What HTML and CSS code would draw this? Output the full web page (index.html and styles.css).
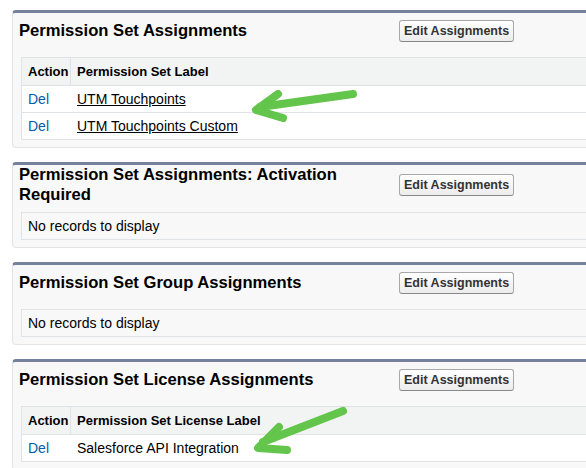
FILE: index.html
```html
<!DOCTYPE html>
<html>
<head>
<meta charset="utf-8">
<link rel="stylesheet" href="styles.css">
</head>
<body>
<div class="page">
  <div class="block">
    <div class="block-head">
      <h2 class="title">Permission Set Assignments</h2>
      <button class="btn">Edit Assignments</button>
    </div>
    <table class="list">
      <tr><th class="c-act">Action</th><th>Permission Set Label</th></tr>
      <tr><td class="c-act"><a class="del" href="#">Del</a></td><td><a class="lbl" href="#">UTM Touchpoints</a></td></tr>
      <tr><td class="c-act"><a class="del" href="#">Del</a></td><td><a class="lbl" href="#">UTM Touchpoints Custom</a></td></tr>
    </table>
  </div>

  <div class="block">
    <div class="block-head">
      <h2 class="title">Permission Set Assignments: Activation Required</h2>
      <button class="btn">Edit Assignments</button>
    </div>
    <div class="empty">No records to display</div>
  </div>

  <div class="block">
    <div class="block-head">
      <h2 class="title">Permission Set Group Assignments</h2>
      <button class="btn">Edit Assignments</button>
    </div>
    <div class="empty">No records to display</div>
  </div>

  <div class="block">
    <div class="block-head">
      <h2 class="title">Permission Set License Assignments</h2>
      <button class="btn">Edit Assignments</button>
    </div>
    <table class="list">
      <tr><th class="c-act">Action</th><th>Permission Set License Label</th></tr>
      <tr><td class="c-act"><a class="del" href="#">Del</a></td><td>Salesforce API Integration</td></tr>
    </table>
  </div>
</div>

<svg class="arrows" width="586" height="468" viewBox="0 0 586 468">
  <g fill="none" stroke="#63c54b" stroke-width="8" stroke-linecap="round" stroke-linejoin="round">
    <path d="M278 94 L256 110 L283 118"/>
    <path d="M260 107 L353 94"/>
    <path d="M279 427 L258 448 L287 450"/>
    <path d="M263 442 L343 411"/>
  </g>
</svg>
</body>
</html>
```

FILE: styles.css
```css
html, body {
  margin: 0;
  padding: 0;
  overflow: hidden;
  background: #ffffff;
}

body {
  font-family: "Liberation Sans", Arial, sans-serif;
  color: #000;
  width: 586px;
  height: 468px;
  position: relative;
}

.page {
  width: 586px;
  height: 468px;
  box-sizing: border-box;
  overflow: hidden;
  padding: 10px 0 0 12px;
  display: flex;
  flex-direction: column;
  gap: 14px;
}

.block {
  flex: none;
  width: 640px;
  background: #f8f8f8;
  border: 1px solid #e2e4e6;
  border-top: 3px solid #76819b;
  border-radius: 4px;
  padding: 0 0 7px 8px;
}

.block-head {
  display: flex;
  align-items: center;
  min-height: 36px;
  margin-bottom: 8px;
}

.title {
  margin: 0 0 0 -2px;
  width: 370px;
  font-size: 16.6px;
  line-height: 19.5px;
  font-weight: bold;
  color: #000;
}

.btn {
  margin-left: 10px;
  height: 22px;
  padding: 0 4px;
  font-family: "Liberation Sans", Arial, sans-serif;
  font-size: 12.5px;
  font-weight: bold;
  color: #333;
  background: linear-gradient(#ffffff, #ececec);
  border: 1px solid #a8a8a8;
  border-bottom-color: #888888;
  border-radius: 3px;
}

.list {
  width: 100%;
  border-collapse: separate;
  border-spacing: 0;
  background: #ffffff;
  border-top: 1px solid #e0e3e5;
  border-left: 1px solid #e0e3e5;
  table-layout: fixed;
}

.list th {
  text-align: left;
  font-size: 13px;
  font-weight: bold;
  color: #000;
  background: #f2f3f3;
  height: 27px;
  padding: 0 0 0 6px;
  border-bottom: 1px solid #e0e3e5;
}

.list td {
  font-size: 14px;
  color: #000;
  height: 26px;
  padding: 0 0 0 6px;
  border-bottom: 1px solid #e0e3e5;
}

.list .c-act {
  width: 42px;
}

.list th.c-act {
  border-right: 1px solid #e0e3e5;
}

.del {
  color: #015ba7;
  text-decoration: none;
}

.lbl {
  color: #000;
  text-decoration: underline;
}

.empty {
  font-size: 14px;
  color: #000;
  height: 26px;
  line-height: 26px;
  padding-left: 6px;
  border: 1px solid #e0e3e5;
  border-right: none;
  background: #f8f8f8;
}

.arrows {
  position: absolute;
  top: 0;
  left: 0;
  pointer-events: none;
}
```
